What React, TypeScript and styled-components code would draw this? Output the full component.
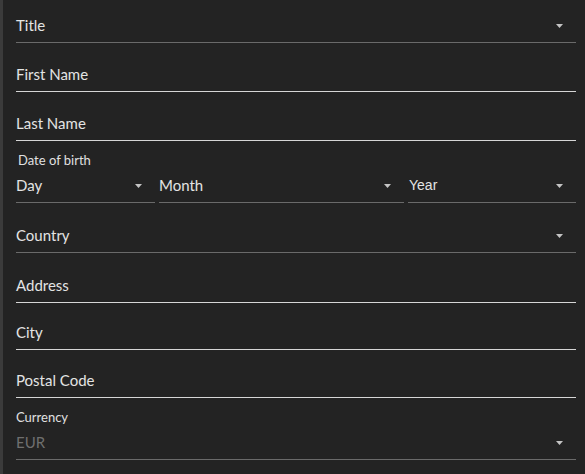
import styled, { createGlobalStyle } from 'styled-components';

const GlobalStyle = createGlobalStyle`
  html, body {
    margin: 0;
    padding: 0;
    background: #232323;
  }
  body {
    font-family: Lato, "Open Sans", sans-serif;
    color: #e4e4e4;
  }
`;

const Form = styled.form`
  min-height: 474px;
  box-sizing: border-box;
  border-left: 3px solid #3b3b3b;
  padding: 9px 9px 0 13px;
  display: flex;
  flex-direction: column;
`;

const Field = styled.div<{ $select?: boolean; $gap?: number }>`
  height: 34px;
  box-sizing: border-box;
  margin-top: ${(p) => p.$gap ?? 15}px;
  display: flex;
  align-items: center;
  justify-content: space-between;
  border-bottom: 1px solid ${(p) => (p.$select ? '#6a6a6a' : '#d6d6d6')};
  font-size: 15px;
  padding-right: 13px;
`;

const Value = styled.span<{ $muted?: boolean; $plain?: boolean }>`
  color: ${(p) => (p.$muted ? '#6f6f6f' : '#e4e4e4')};
  font-family: ${(p) =>
    p.$plain ? '"Liberation Sans", Arial, sans-serif' : 'inherit'};
  font-size: ${(p) => (p.$plain ? '14px' : 'inherit')};
  padding-left: ${(p) => (p.$plain ? '1px' : '0')};
  margin-top: -1px;
`;

const Label = styled.div<{ $indent?: number }>`
  font-size: 13px;
  line-height: 16px;
  margin-top: 11px;
  padding-left: ${(p) => p.$indent ?? 0}px;
  color: #e0e0e0;
`;

const DateRow = styled.div`
  display: grid;
  grid-template-columns: 139fr 245fr 168fr;
  column-gap: 4px;
  & > div {
    margin-top: 1px;
  }
`;

const Caret = () => (
  <svg width="7" height="4" viewBox="0 0 7 4">
    <path d="M0 0 H7 L3.5 4 Z" fill="#c4c4c4" />
  </svg>
);

function Select({
  text,
  gap,
  muted,
  plain,
}: {
  text: string;
  gap?: number;
  muted?: boolean;
  plain?: boolean;
}) {
  return (
    <Field $select $gap={gap}>
      <Value $muted={muted} $plain={plain}>
        {text}
      </Value>
      <Caret />
    </Field>
  );
}

function Input({ text, gap }: { text: string; gap?: number }) {
  return (
    <Field $gap={gap}>
      <Value>{text}</Value>
    </Field>
  );
}

export default function App() {
  return (
    <>
      <GlobalStyle />
      <Form>
        <Select text="Title" gap={0} />
        <Input text="First Name" />
        <Input text="Last Name" />
        <Label $indent={2}>Date of birth</Label>
        <DateRow>
          <Select text="Day" gap={1} />
          <Select text="Month" gap={1} />
          <Select text="Year" gap={1} plain />
        </DateRow>
        <Select text="Country" gap={16} />
        <Input text="Address" gap={16} />
        <Input text="City" gap={13} />
        <Input text="Postal Code" gap={14} />
        <Label>Currency</Label>
        <Select text="EUR" gap={1} muted />
      </Form>
    </>
  );
}
